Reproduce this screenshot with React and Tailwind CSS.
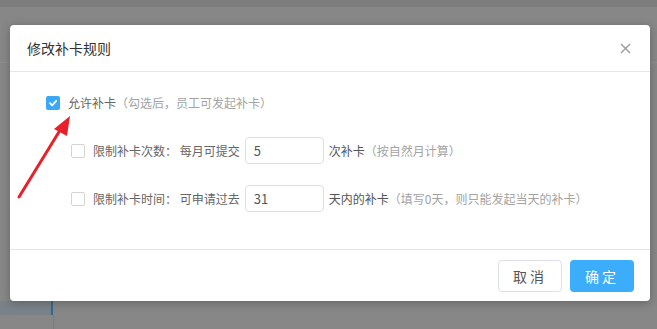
const font = { fontFamily: '"Noto Sans CJK SC", "Liberation Sans", sans-serif' };

function Checkbox({ checked }) {
  if (checked) {
    return (
      <span className="flex h-[14px] w-[14px] shrink-0 items-center justify-center rounded-[2px] bg-[#3ba8f7]">
        <svg width="10" height="10" viewBox="0 0 10 10" fill="none">
          <path d="M2 5.2 L4.2 7.3 L8.2 2.9" stroke="#fff" strokeWidth="1.8" strokeLinecap="round" strokeLinejoin="round" />
        </svg>
      </span>
    );
  }
  return <span className="block h-[14px] w-[14px] shrink-0 rounded-[2px] border border-[#d4d4d4] bg-white" />;
}

function NumberInput({ value }) {
  return (
    <div className="mx-[5px] flex h-[27px] w-[79px] items-center rounded-[4px] border border-[#dcdfe6] bg-white pl-[8px] text-[13px] text-[#555]">
      {value}
    </div>
  );
}

function Arrow() {
  return (
    <svg className="pointer-events-none absolute left-0 top-0" width="657" height="329" viewBox="0 0 657 329">
      <line x1="19" y1="197" x2="62" y2="127" stroke="#e8202a" strokeWidth="3" strokeLinecap="round" />
      <polygon points="70,116 54,129 67,136" fill="#e8202a" />
    </svg>
  );
}

export default function App() {
  return (
    <div
      lang="zh-CN"
      className="relative h-[329px] w-[657px] overflow-hidden bg-[#878787] [font-feature-settings:'chws'_0,'halt'_0] [text-spacing-trim:space-all]"
      style={font}
    >
      {/* page behind the overlay */}
      <div className="h-[7px] bg-[#7d7d7d]" />
      <div className="mt-[55px] h-px bg-[#8f8f8f]" />
      <div className="mt-[238px] flex h-[14px]">
        <div className="w-[51px] bg-[#7a8289]" />
        <div className="w-[2px] bg-[#2f6a95]" />
      </div>
      <div className="ml-[53px] h-[30px] w-px bg-[#7c7c7c]" />

      {/* dialog */}
      <div className="absolute left-[10px] top-[25px] w-[640px] rounded-[4px] bg-white shadow-[0_2px_10px_rgba(0,0,0,0.25)]">
        <div className="flex h-[46px] items-center justify-between pl-[17px] pr-[19px]">
          <span className="text-[14px] leading-none text-[#333]">修改补卡规则</span>
          <svg width="11" height="11" viewBox="0 0 11 11">
            <path d="M1 1 L10 10 M10 1 L1 10" stroke="#9a9a9a" strokeWidth="1.4" />
          </svg>
        </div>
        <div className="h-px bg-[#e6e6e6]" />

        <div className="h-[177px] pt-[17px] text-[12px] leading-none">
          <div className="flex h-[28px] items-center gap-[8px] pl-[36px]">
            <Checkbox checked />
            <span className="text-[#666]">
              允许补卡<span className="text-[#a3a3a3]">（勾选后，员工可发起补卡）</span>
            </span>
          </div>

          <div className="mt-[20px] flex h-[27px] items-center pl-[61px]">
            <Checkbox />
            <span className="ml-[8px] text-[#666]">限制补卡次数： 每月可提交</span>
            <NumberInput value="5" />
            <span className="text-[#555]">
              次补卡<span className="text-[#a3a3a3]">（按自然月计算）</span>
            </span>
          </div>

          <div className="mt-[21px] flex h-[27px] items-center pl-[61px]">
            <Checkbox />
            <span className="ml-[8px] text-[#666]">限制补卡时间： 可申请过去</span>
            <NumberInput value="31" />
            <span className="text-[#555]">
              天内的补卡<span className="text-[#a3a3a3]">（填写0天，则只能发起当天的补卡）</span>
            </span>
          </div>
        </div>

        <div className="h-px bg-[#e6e6e6]" />
        <div className="flex h-[51px] items-center justify-end gap-[8px] pr-[16px] pt-px">
          <button className="h-[32px] w-[64px] rounded-[4px] border border-[#dcdfe6] bg-white text-[14px] tracking-[3px] text-[#555]">
            取消
          </button>
          <button className="h-[32px] w-[64px] rounded-[4px] bg-[#3badfb] text-[14px] tracking-[3px] text-white">
            确定
          </button>
        </div>
      </div>

      <Arrow />
    </div>
  );
}
